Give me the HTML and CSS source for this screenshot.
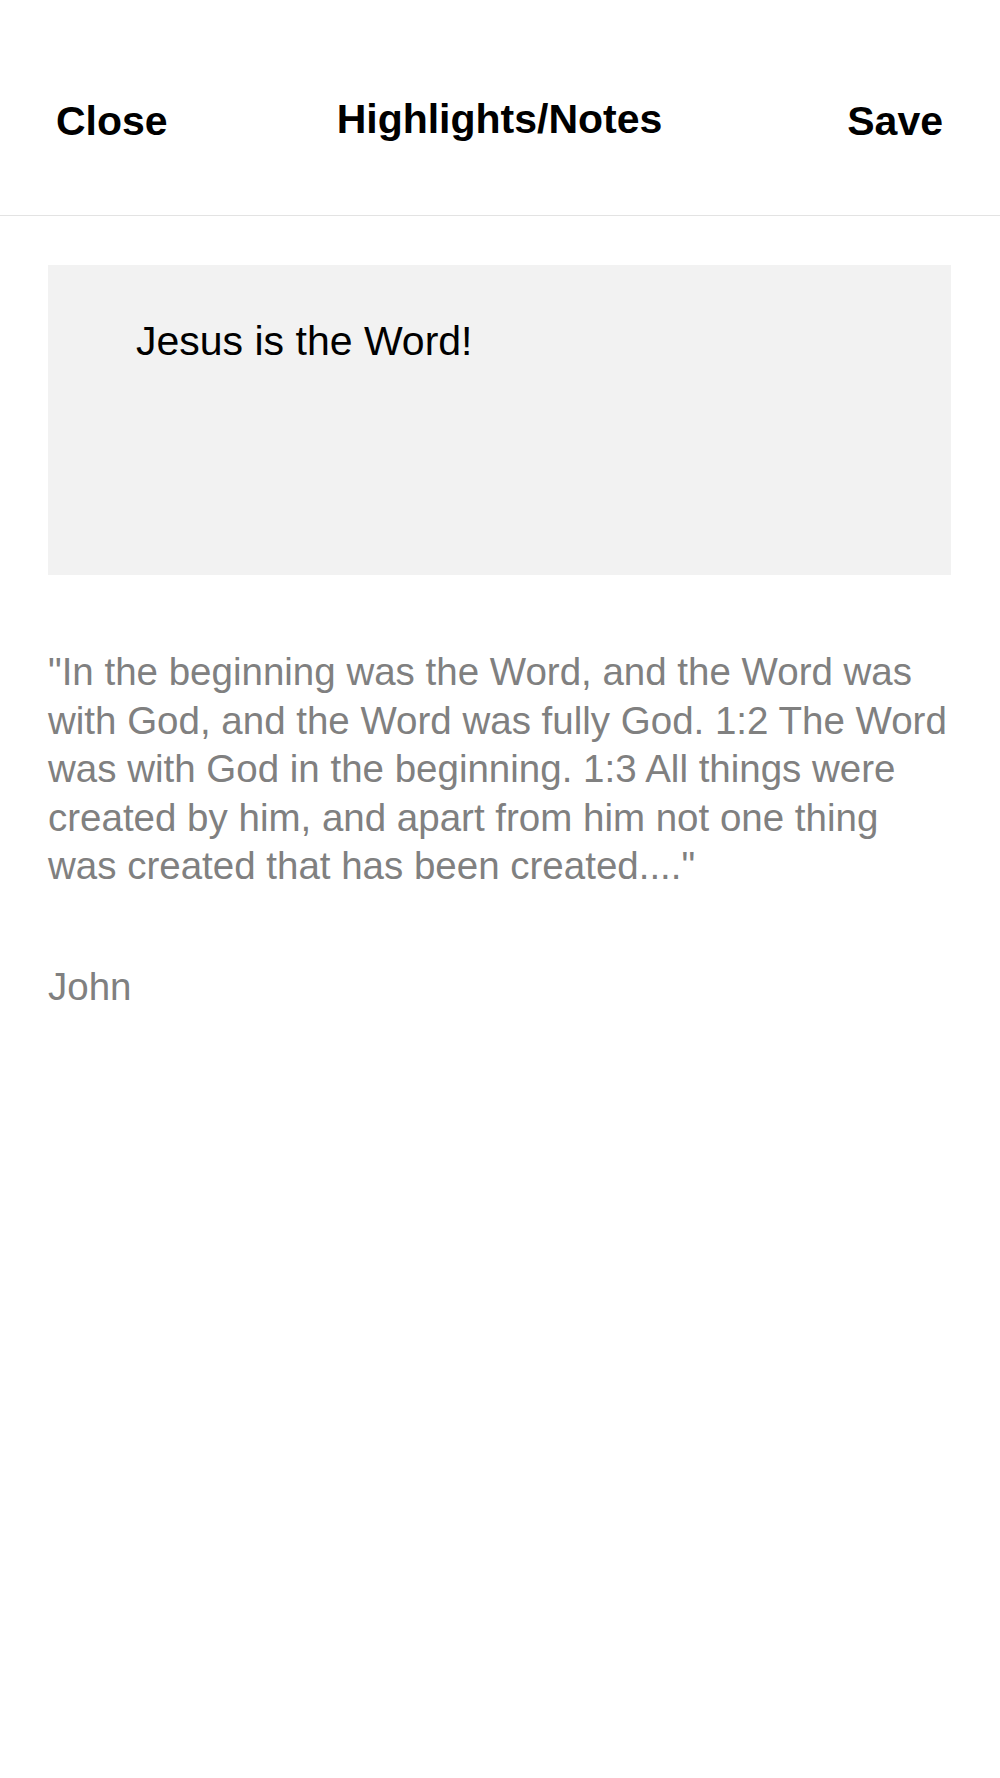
FILE: index.html
```html
<!DOCTYPE html>
<html lang="en">
<head>
<meta charset="utf-8">
<title>Highlights/Notes</title>
<link rel="stylesheet" href="styles.css">
</head>
<body>
<div class="screen">
  <header class="topbar">
    <span class="btn btn-close">Close</span>
    <span class="title">Highlights/Notes</span>
    <span class="btn btn-save">Save</span>
  </header>
  <main class="content">
    <div class="note-box">
      <p class="note-text">Jesus is the Word!</p>
    </div>
    <p class="quote">"In the beginning was the Word, and the Word was with God, and the Word was fully God. 1:2 The Word was with God in the beginning. 1:3 All things were created by him, and apart from him not one thing was created that has been created...."</p>
    <p class="book">John</p>
  </main>
</div>
</body>
</html>
```
FILE: styles.css
```css
html, body {
  margin: 0;
  padding: 0;
  background: #ffffff;
}
body {
  font-family: "Liberation Sans", Arial, Helvetica, sans-serif;
  color: #000;
}
.screen {
  width: 1000px;
  min-height: 1778px;
}
.topbar {
  height: 216px;
  border-bottom: 1px solid #e3e3e3;
  box-sizing: border-box;
  display: grid;
  grid-template-columns: 1fr auto 1fr;
  align-items: center;
  padding: 28px 57px 0 56px;
}
.btn {
  font-size: 41px;
  font-weight: bold;
}
.btn-close { justify-self: start; }
.btn-save { justify-self: end; }
.title {
  font-size: 41px;
  font-weight: bold;
  margin-top: -4px;
}
.content {
  padding: 49px 49px 0 48px;
}
.note-box {
  background: #f2f2f2;
  height: 310px;
  padding: 52px 0 0 88px;
  box-sizing: border-box;
}
.note-text {
  margin: 0;
  font-size: 41px;
  line-height: 48px;
}
.quote {
  margin: 73px 0 0 0;
  font-size: 38.5px;
  line-height: 48.5px;
  color: #808080;
}
.book {
  margin: 72px 0 0 0;
  font-size: 38.5px;
  line-height: 48.5px;
  color: #808080;
}
```
